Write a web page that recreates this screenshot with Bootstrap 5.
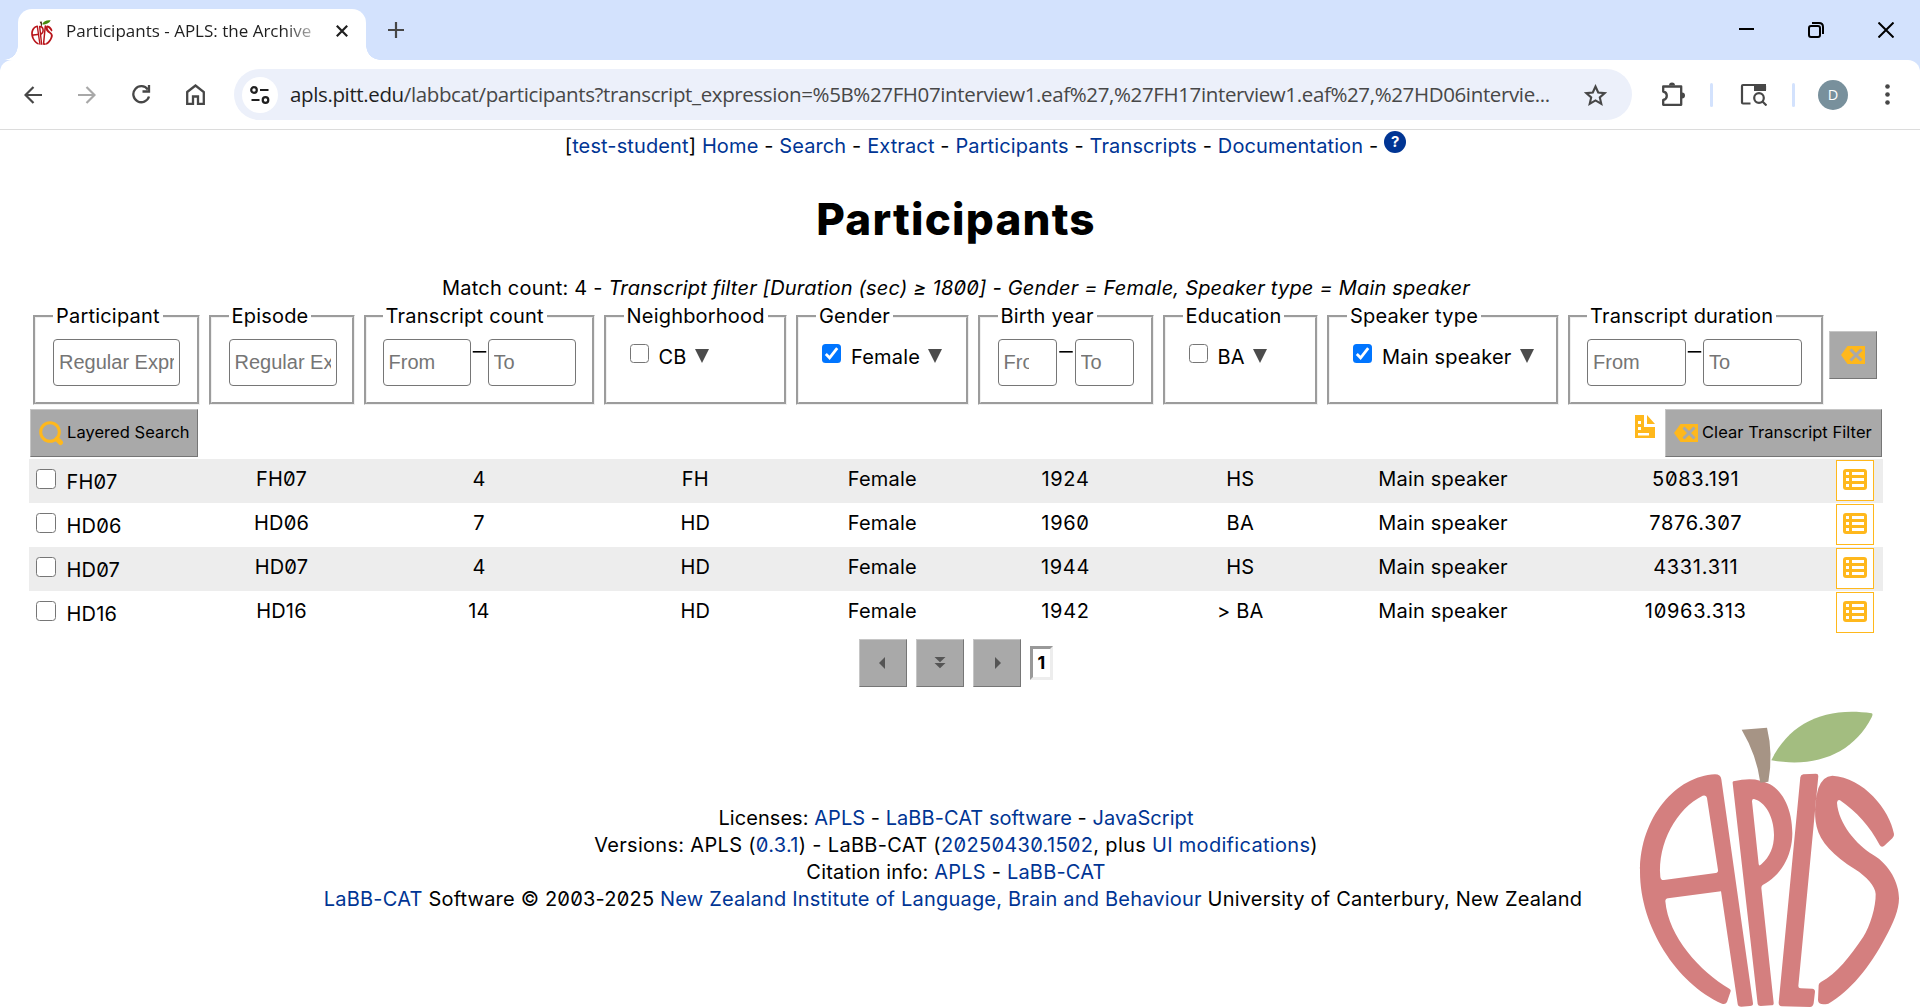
<!DOCTYPE html>
<html lang="en">
<head>
<meta charset="utf-8">
<title>Participants - APLS: the Archive</title>
<link href="https://cdn.jsdelivr.net/npm/bootstrap@5.3.0/dist/css/bootstrap.min.css" rel="stylesheet">
<style>
body{font-family:Inter,"Liberation Sans",sans-serif;font-size:20px;line-height:27px;letter-spacing:.2px;color:#000;background:#fff;height:1008px;overflow:hidden;font-feature-settings:"zero"}
a{color:#003594;text-decoration:none}
svg{display:block;flex:none}
.tabstrip{height:60px;background:#d3e2fd}
.tab-active{width:348px;height:51px;margin:9px 0 0 18px;background:#fff;border-radius:14px 14px 0 0;padding:0 18px 5px 13px}
.tab-active::before,.tab-active::after{content:"";position:absolute;bottom:0;width:14px;height:14px}
.tab-active::before{left:-14px;background:radial-gradient(circle at 0 0,transparent 13.5px,#fff 14px)}
.tab-active::after{right:-14px;background:radial-gradient(circle at 100% 0,transparent 13.5px,#fff 14px)}
.tab-title{font:17px/24px "Open Sans","Noto Sans",sans-serif;letter-spacing:0;color:#1f1f1f;width:247px;margin:-2px 0 0 13px;-webkit-mask:linear-gradient(90deg,#000 88%,rgba(0,0,0,.3));overflow:hidden}
.win-btns{margin-right:26px;gap:54px;height:60px}
.toolbar-wrap{background:#d3e2fd}
.browserbar{height:70px;background:#fff;border-bottom:1px solid #dcdcdc;border-radius:12px 12px 0 0}
.omnibox{width:1398px;height:51px;border-radius:26px;background:#ecf0fa;padding:0 25px 0 8px}
.site-info{width:36px;height:36px;border-radius:50%;background:#fff}
.url-text{font:20.5px/30px "Open Sans","Noto Sans",sans-serif;letter-spacing:-.37px;color:#474747;margin:-2px 0 0 12px;width:1270px}
.url-text b{font-weight:400;color:#1f1f1f}
.vsep{width:3px;height:24px;background:#d3e2fd;border-radius:2px}
.avatar-dot{width:30px;height:30px;border-radius:50%;background:#78909c;color:#fff;font:14.5px/30px "Open Sans",sans-serif}
.page-body{padding:3px 37px 0 29px}
.topnav{padding-left:59px;height:27px;letter-spacing:.12px}
.help-dot{width:22px;height:22px;border-radius:50%;background:#003594;color:#fff;font:bold 15px/22px Inter,sans-serif;letter-spacing:0;margin:-2px 0 0 6px}
h1.page-title{font-weight:800;font-size:44px;line-height:50px;letter-spacing:1.200px;margin:34px 0 31px}
.cols{display:grid;grid-template-columns:175px 155px 240px 192.5px 181.5px 185px 164.5px 241px 264.5px 55px}
fieldset.fbox{margin:0 4.500px;height:102px;border:3px groove #f0f0f0;padding:9px 0 0 17px}
.fbox:first-child{margin-left:4px}
fieldset.range{padding-left:16px}
.fbox legend{float:none;width:auto;font-size:20px;line-height:27px;margin:0;padding:0 3px;white-space:nowrap}
.finput{border:1px solid #767676;border-radius:4px;height:47px;padding:0 5px;font:20px "Liberation Sans",sans-serif;letter-spacing:0;color:#757575;background:#fff}
.finput span{display:block;line-height:45px;overflow:hidden;white-space:nowrap}
.finput.tight{padding-right:27px}
.rdash{width:17px;line-height:24px;text-align:center;font-size:20px;letter-spacing:0;transform:scaleX(1.350)}
.tight+.rdash{width:18px}
.cbox{width:19px;height:19px;border:1.500px solid #767676;border-radius:3.500px;background:#fff;flex:none;display:block}
.cbox.on{background:#0075ff;border:0}
.opt{padding:6px 0 0 6px;white-space:nowrap}
.opt .cbox{margin-top:-1px}
.opt .lbl{margin:-1px 8px 0 10px}
.tri{width:0;height:0;border:7.500px solid transparent;border-top:14px solid #4c4c4c;border-bottom:0;margin-top:4px}
.gbtn{background:#a9a9a9;border:1px solid;border-color:#c6c6c6 #767676 #767676 #c6c6c6;height:48px;font-size:16.500px;letter-spacing:.050px;white-space:nowrap;padding:0}
.gbtn.labelled{padding-left:8px}
.gbtn span{margin:-1px 0 0 4px}
.gsq{width:48px}
.row-data{height:44px}
.row-data:nth-child(odd){background:#ededed}
.row-data .c{padding-top:7px;text-align:center}
.row-data .cname{padding:10px 0 0 7px}
.cname .cbox{width:20px;height:20px;margin:0 10.500px 0 0}
.num{letter-spacing:.7px}
.listbtn{width:38px;height:41px;margin:1px 0 0 8px;border:1px solid #ffb81c;background:#fff;padding-top:8px}
.pager{gap:9px;margin-top:4px}
.pgbox{width:23px;height:34px;border:3px inset #ededed;font-weight:700;font-size:18px;line-height:27px}
.page-foot{margin-top:118px}
.apple{width:320px;height:318px}
</style>
<script src="https://cdn.jsdelivr.net/npm/bootstrap@5.3.0/dist/js/bootstrap.bundle.min.js"></script>
</head>
<body>
<svg width="0" height="0" class="position-absolute">
<symbol id="apple" viewBox="0 0 960 954">
<path fill-rule="evenodd" d="M345 253Q362 253 364 268L459 940Q460 948 450 948L424 950Q414 950 413 942L363 604L204 625Q196 626 196 634C205 740 300 845 388 896Q394 899 392 904L381 936Q376 945 366 941C230 880 120 710 120 545C120 380 230 258 345 253ZM308 317Q319 314 321 325L354 540Q355 548 347 549L192 570Q182 571 181 560C172 460 230 355 308 317Z M400 274C450 262 480 268 510 283C550 305 577 360 577 430C577 500 540 560 488 585Q484 588 484 594L521 938Q522 946 514 946L482 948Q474 948 473 942L398 280Q397 275 400 274ZM462 327Q456 326 456 334L476 522Q477 530 484 523C510 500 522 470 522 435C522 380 495 335 462 327Z M610 253L648 251Q655 251 655 258L595 888Q595 895 602 895L637 896Q645 897 645 905L641 940Q639 951 630 951L545 949Q536 948 536 938L601 262Q602 254 610 253Z M697 257C790 262 870 360 882 432Q883 440 877 445L852 468Q844 474 839 465C810 410 770 365 720 331Q712 328 711 338C715 400 770 465 820 495C870 525 897 580 897 625C897 660 880 700 855 745C810 830 750 905 685 941Q655 948 654 930L656 885Q657 879 663 876C710 850 750 800 790 740C810 710 828 650 827 612C826 590 800 560 765 538C700 497 660 455 650 410C640 370 648 320 655 295Q668 258 697 257Z" fill="currentColor"/>
<path d="M514 211C570 95 680 50 815 70Q820 72 815 82C760 190 650 235 514 211Z" style="fill:var(--leaf)"/>
<path d="M425 119L501 113Q520 190 505 275L481 278Q470 195 425 119Z" style="fill:var(--stem)"/>
</symbol>
<symbol id="erase" viewBox="0 0 24 18"><path d="M6.500 0H24V18H6.500L0 9Z" fill="#ffb81c"/><path d="M9.500 3.500L20.500 14.500M20.500 3.500L9.500 14.500" stroke="#a9a9a9" stroke-width="3"/></symbol>
<symbol id="tick" viewBox="0 0 19 19"><path d="M3.800 10L7.600 13.800L15.200 4.200" fill="none" stroke="#fff" stroke-width="2.800"/></symbol>
<symbol id="list" viewBox="0 0 24 21"><rect width="24" height="21" rx="3" fill="#ffb81c"/><path d="M3 3h3v3H3zM9 3h12v3H9zM3 9h3v3H3zM9 9h12v3H9zM3 15h3v3H3zM9 15h12v3H9z" fill="#fff"/></symbol>
</svg>

<header>
<div class="tabstrip d-flex">
  <div class="tab-active position-relative d-flex align-items-center">
    <svg width="22" height="25" viewBox="115 60 788 895" style="color:#b8141a;--leaf:#478a0c;--stem:#4b2f1b"><use href="#apple" width="960" height="954"/></svg>
    <div class="tab-title text-nowrap">Participants - APLS: the Archive</div>
    <svg class="ms-auto" width="12" height="12" viewBox="0 0 12 12" style="margin-top:-3px"><path d="M.8.800L11.200 11.200M11.200.8.800 11.200" stroke="#1f1f1f" stroke-width="2.200"/></svg>
  </div>
  <svg width="16" height="16" viewBox="0 0 16 16" style="margin:22px 0 0 22px"><path d="M8 0V16M0 8H16" stroke="#474747" stroke-width="2.200"/></svg>
  <div class="win-btns ms-auto d-flex align-items-center">
    <svg width="15" height="16" viewBox="0 0 15 16"><path d="M0 7H15" stroke="#000" stroke-width="2"/></svg>
    <svg width="16" height="16" viewBox="0 0 16 16" fill="none" stroke="#000" stroke-width="2"><rect x="1" y="4" width="11" height="11" rx="2"/><path d="M4 1H11Q15 1 15 5V12"/></svg>
    <svg width="16" height="16" viewBox="0 0 16 16"><path d="M.5.500L15.500 15.500M15.500.5.500 15.500" stroke="#000" stroke-width="2"/></svg>
  </div>
</div>
<div class="toolbar-wrap">
<div class="browserbar d-flex align-items-center">
  <svg width="18" height="18" viewBox="0 0 18 18" fill="none" stroke="#474747" stroke-width="2.200" style="margin-left:24px"><path d="M18 9H2M9.500 1L1.500 9L9.500 17"/></svg>
  <svg width="18" height="18" viewBox="0 0 18 18" fill="none" stroke="#a8a8a8" stroke-width="2.200" style="margin-left:36px"><path d="M0 9H16M8.500 1L16.500 9L8.500 17"/></svg>
  <svg width="19" height="19" viewBox="0 0 19 19" fill="none" stroke="#474747" stroke-width="2.300" style="margin-left:36px"><path d="M15.800 4.500A8 8 0 1 0 17 11.500M17 0V6.500H10.500"/></svg>
  <svg width="19" height="21" viewBox="0 0 19 21" fill="none" stroke="#474747" stroke-width="2.300" style="margin-left:35px"><path d="M1.200 8L9.500 1.500L17.800 8V19.800H12V12.500H7V19.800H1.200Z"/></svg>
  <div class="omnibox d-flex align-items-center" style="margin-left:29px">
    <div class="site-info d-flex align-items-center justify-content-center"><svg width="20" height="18" viewBox="0 0 20 18" fill="none" stroke="#1f1f1f" stroke-width="2.200"><circle cx="4" cy="4" r="2.800"/><path d="M10 4H18.500M1.500 14H9.500"/><circle cx="15.500" cy="14" r="2.800"/></svg></div>
    <div class="url-text text-nowrap"><b>apls.pitt.edu</b>/labbcat/participants?transcript_expression=%5B%27FH07interview1.eaf%27,%27FH17interview1.eaf%27,%27HD06intervie...</div>
    <svg class="ms-auto" width="23" height="22" viewBox="0 0 23 22" fill="none" stroke="#474747" stroke-width="2.100"><path d="M11.500 2.500L14.200 8.500L20.700 9.100L15.800 13.400L17.300 19.800L11.500 16.400L5.700 19.800L7.200 13.400L2.300 9.100L8.800 8.500Z"/></svg>
  </div>
  <svg width="25" height="25" viewBox="0 0 25 25" style="margin-left:29px"><path d="M2.200 4.500H20.200V22.800H2.200V18C7 17 7 10.500 2.200 9.500Z" fill="none" stroke="#474747" stroke-width="2.300" stroke-linejoin="round"/><path d="M8 3.500a3 3 0 0 1 6 0zM21 10.500a3 3 0 0 1 0 6z" fill="#474747"/></svg>
  <div class="vsep" style="margin-left:24px"></div>
  <svg width="27" height="23" viewBox="0 0 27 23" style="margin-left:27px" fill="none" stroke="#474747" stroke-width="2.200"><path d="M10.500 20.500H3Q2 20.500 2 19.500V3Q2 2 3 2H24Q25 2 25 3V7"/><path d="M14 1H26V8H14Z" fill="#474747" stroke="none"/><circle cx="19" cy="15" r="4.800"/><path d="M22.500 18.500L26.500 22.500"/></svg>
  <div class="vsep" style="margin-left:25px"></div>
  <div class="avatar-dot text-center" style="margin-left:23px">D</div>
  <svg width="5" height="21" viewBox="0 0 5 21" fill="#474747" style="margin-left:36.5px"><circle cx="2.500" cy="2.500" r="2.300"/><circle cx="2.500" cy="10.500" r="2.300"/><circle cx="2.500" cy="18.500" r="2.300"/></svg>
</div>
</div>
</header>

<main class="page-body">
<nav class="topnav d-flex justify-content-center"><span>[<a href="#">test-student</a>] <a href="#">Home</a> - <a href="#">Search</a> - <a href="#">Extract</a> - <a href="#">Participants</a> - <a href="#">Transcripts</a> - <a href="#">Documentation</a> -</span><a href="#" class="help-dot text-center">?</a></nav>
<h1 class="page-title text-center">Participants</h1>
<div class="text-center" style="margin-bottom:1px">Match count: 4 - <em>Transcript filter [Duration (sec) ≥ 1800] - Gender = Female, Speaker type = Main speaker</em></div>

<div class="cols">
  <fieldset class="fbox"><legend>Participant</legend><div class="finput" style="width:127px"><span>Regular Expression</span></div></fieldset>
  <fieldset class="fbox"><legend>Episode</legend><div class="finput" style="width:108px"><span>Regular Expression</span></div></fieldset>
  <fieldset class="fbox range"><legend>Transcript count</legend><div class="d-flex"><div class="finput" style="width:88px"><span>From</span></div><div class="rdash">–</div><div class="finput" style="width:88px"><span>To</span></div></div></fieldset>
  <fieldset class="fbox"><legend>Neighborhood</legend><div class="opt d-flex"><i class="cbox"></i><span class="lbl">CB</span><i class="tri"></i></div></fieldset>
  <fieldset class="fbox"><legend>Gender</legend><div class="opt d-flex"><i class="cbox on"><svg width="19" height="19"><use href="#tick"/></svg></i><span class="lbl">Female</span><i class="tri"></i></div></fieldset>
  <fieldset class="fbox"><legend>Birth year</legend><div class="d-flex"><div class="finput tight" style="width:59px"><span>From</span></div><div class="rdash">–</div><div class="finput tight" style="width:59px"><span>To</span></div></div></fieldset>
  <fieldset class="fbox"><legend>Education</legend><div class="opt d-flex"><i class="cbox"></i><span class="lbl">BA</span><i class="tri"></i></div></fieldset>
  <fieldset class="fbox"><legend>Speaker type</legend><div class="opt d-flex"><i class="cbox on"><svg width="19" height="19"><use href="#tick"/></svg></i><span class="lbl">Main speaker</span><i class="tri"></i></div></fieldset>
  <fieldset class="fbox range"><legend>Transcript duration</legend><div class="d-flex"><div class="finput" style="width:99px"><span>From</span></div><div class="rdash">–</div><div class="finput" style="width:99px"><span>To</span></div></div></fieldset>
  <button class="gbtn gsq d-flex align-items-center justify-content-center" style="margin:28px 0 0 1px"><svg width="24" height="18"><use href="#erase"/></svg></button>
</div>

<div class="d-flex" style="margin:4px 1px 2px">
  <button class="gbtn labelled d-flex align-items-center" style="width:168px"><svg width="24" height="25" viewBox="0 0 24 25" fill="none" stroke="#ffb81c"><circle cx="11" cy="11" r="9.300" stroke-width="3"/><path d="M18 18L21.500 21.500" stroke-width="5" stroke-linecap="round"/></svg><span>Layered Search</span></button>
  <svg class="ms-auto" width="20" height="23" viewBox="0 0 20 23" style="margin:6px 10px 0 0"><path d="M0 0H9V12H20V23H0ZM12 0L20 9H12Z" fill="#ffb81c"/><path d="M3 6h3v3H3zM3 12h3v3H3zM3 18h11v2.500H3z" fill="#fff"/></svg>
  <button class="gbtn labelled d-flex align-items-center" style="width:217px"><svg width="24" height="18"><use href="#erase"/></svg><span>Clear Transcript Filter</span></button>
</div>

<div>
  <div class="cols row-data"><div class="cname d-flex"><i class="cbox"></i>FH07</div><div class="c">FH07</div><div class="c">4</div><div class="c">FH</div><div class="c">Female</div><div class="c num">1924</div><div class="c">HS</div><div class="c">Main speaker</div><div class="c num">5083.191</div><div class="listbtn d-flex justify-content-center"><svg width="24" height="21"><use href="#list"/></svg></div></div>
  <div class="cols row-data"><div class="cname d-flex"><i class="cbox"></i>HD06</div><div class="c">HD06</div><div class="c">7</div><div class="c">HD</div><div class="c">Female</div><div class="c num">1960</div><div class="c">BA</div><div class="c">Main speaker</div><div class="c num">7876.307</div><div class="listbtn d-flex justify-content-center"><svg width="24" height="21"><use href="#list"/></svg></div></div>
  <div class="cols row-data"><div class="cname d-flex"><i class="cbox"></i>HD07</div><div class="c">HD07</div><div class="c">4</div><div class="c">HD</div><div class="c">Female</div><div class="c num">1944</div><div class="c">HS</div><div class="c">Main speaker</div><div class="c num">4331.311</div><div class="listbtn d-flex justify-content-center"><svg width="24" height="21"><use href="#list"/></svg></div></div>
  <div class="cols row-data"><div class="cname d-flex"><i class="cbox"></i>HD16</div><div class="c">HD16</div><div class="c">14</div><div class="c">HD</div><div class="c">Female</div><div class="c num">1942</div><div class="c">&gt; BA</div><div class="c">Main speaker</div><div class="c num">10963.313</div><div class="listbtn d-flex justify-content-center"><svg width="24" height="21"><use href="#list"/></svg></div></div>
</div>

<div class="pager d-flex justify-content-center align-items-center">
  <button class="gbtn gsq d-flex align-items-center justify-content-center"><svg width="12" height="12" viewBox="0 0 12 12"><path d="M8 0V12L2 6Z" fill="#555"/></svg></button>
  <button class="gbtn gsq d-flex align-items-center justify-content-center"><svg width="12" height="12" viewBox="0 0 12 12"><path d="M.5 0H11.500L6 5.200ZM.5 6H11.500L6 11.200Z" fill="#555"/></svg></button>
  <button class="gbtn gsq d-flex align-items-center justify-content-center"><svg width="12" height="12" viewBox="0 0 12 12"><path d="M4 0V12L10 6Z" fill="#555"/></svg></button>
  <div class="pgbox text-center">1</div>
</div>

<footer class="page-foot text-center">
<div style="letter-spacing:.05px">Licenses: <a href="#">APLS</a> - <a href="#">LaBB-CAT software</a> - <a href="#">JavaScript</a></div>
<div style="letter-spacing:.31px">Versions: APLS (<a href="#">0.3.1</a>) - LaBB-CAT (<a href="#">20250430.1502</a>, plus <a href="#">UI modifications</a>)</div>
<div>Citation info: <a href="#">APLS</a> - <a href="#">LaBB-CAT</a></div>
<div style="padding-right:6px"><a href="#">LaBB-CAT</a> Software © 2003-2025 <a href="#">New Zealand Institute of Language, Brain and Behaviour</a> University of Canterbury, New Zealand</div>
</footer>
</main>
<svg class="apple position-fixed bottom-0 end-0" viewBox="0 0 960 954" style="color:#d47f7f;--leaf:#a3bd80;--stem:#a69485"><use href="#apple" width="960" height="954"/></svg>
</body>
</html>
